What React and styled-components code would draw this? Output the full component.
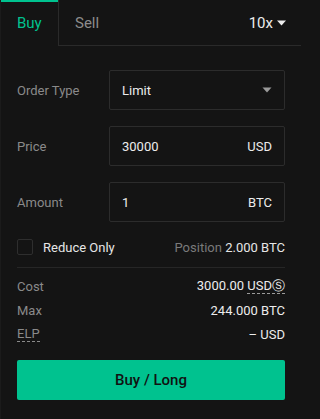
import React from "react";
import styled, { createGlobalStyle } from "styled-components";

const Global = createGlobalStyle`
  html, body { margin: 0; padding: 0; background: #141414; }
  body { font-family: Roboto, "Liberation Sans", Arial, sans-serif; }
  * { box-sizing: border-box; }
`;

const Panel = styled.div`
  width: 301px;
  height: 419px;
  background: #141414;
  border-left: 1px solid #1b1b1b;
  color: #e6e6e6;
  font-size: 13px;
  overflow: hidden;
`;

const Tabs = styled.div`
  display: flex;
  height: 46px;
`;

const ActiveTab = styled.div`
  flex: 0 0 57px;
  border-top: 2px solid #00c28f;
  color: #00c28f;
  font-size: 15px;
  display: flex;
  align-items: center;
  padding-left: 16px;
  padding-bottom: 2px;
`;

const TabRest = styled.div`
  flex: 1 1 0;
  min-width: 0;
  display: flex;
  align-items: center;
  border-left: 1px solid #2a2a2a;
  border-bottom: 1px solid #2a2a2a;
  padding: 0 15px 0 16px;
`;

const Tab = styled.div`
  color: #8c8c8c;
  font-size: 15px;
`;

const Leverage = styled.div`
  margin-left: auto;
  display: flex;
  align-items: center;
  gap: 4px;
  font-size: 15px;
  color: #ececec;
`;

const Caret = ({ color = "#ececec", w = 9, h = 6 }) => (
  <svg width={w} height={h} viewBox="0 0 9 6">
    <path d="M0 0.5 H9 L4.5 5.5 Z" fill={color} />
  </svg>
);

const Form = styled.div`
  padding: 24px 16px 0 16px;
  display: flex;
  flex-direction: column;
`;

const Rows = styled.div`
  display: flex;
  flex-direction: column;
  gap: 16px;
`;

const Row = styled.div`
  display: flex;
  align-items: center;
  height: 40px;
`;

const Label = styled.div`
  width: 92px;
  color: #8a8a8a;
`;

const Field = styled.div`
  flex: 1;
  height: 40px;
  border: 1px solid #2c2c2c;
  border-radius: 2px;
  display: flex;
  align-items: center;
  justify-content: space-between;
  padding: 0 12px;
  color: #ececec;
`;

const CheckRow = styled.div`
  display: flex;
  align-items: center;
  justify-content: space-between;
  margin-top: 17px;
  height: 16px;
`;

const CheckLabel = styled.label`
  display: flex;
  align-items: center;
  gap: 10px;
  color: #e6e6e6;
`;

const Box = styled.span`
  width: 16px;
  height: 16px;
  border: 1px solid #2e2e2e;
  border-radius: 2px;
`;

const Muted = styled.span`
  color: #7a7a7a;
`;

const Divider = styled.div`
  height: 1px;
  background: #262626;
  margin: 12px 0 6px;
`;

const InfoRow = styled.div`
  display: flex;
  justify-content: space-between;
  align-items: center;
  height: 24px;
`;

const InfoLabel = styled.span`
  color: #8a8a8a;
  ${(p) => p.$dashed && `border-bottom: 1px dashed #8a8a8a; line-height: 15px;`}
`;

const Value = styled.span`
  color: #ececec;
`;

const Dashed = styled.span`
  border-bottom: 1px dashed #9a9a9a;
  line-height: 15px;
  display: inline-block;
`;

const Button = styled.button`
  margin-top: 14px;
  height: 40px;
  border: none;
  border-radius: 2px;
  background: #00c28f;
  color: #111;
  font-family: inherit;
  font-size: 15px;
  font-weight: 500;
`;

export default function App() {
  return (
    <>
      <Global />
      <Panel>
        <Tabs>
          <ActiveTab>Buy</ActiveTab>
          <TabRest>
            <Tab>Sell</Tab>
            <Leverage>
              10x <Caret />
            </Leverage>
          </TabRest>
        </Tabs>
        <Form>
          <Rows>
            <Row>
              <Label>Order Type</Label>
              <Field>
                Limit <Caret color="#9a9a9a" w={10} h={6} />
              </Field>
            </Row>
            <Row>
              <Label>Price</Label>
              <Field>
                <span>30000</span>
                <span>USD</span>
              </Field>
            </Row>
            <Row>
              <Label>Amount</Label>
              <Field>
                <span>1</span>
                <span>BTC</span>
              </Field>
            </Row>
          </Rows>
          <CheckRow>
            <CheckLabel>
              <Box />
              Reduce Only
            </CheckLabel>
            <span>
              <Muted>Position</Muted> 2.000 BTC
            </span>
          </CheckRow>
          <Divider />
          <InfoRow>
            <InfoLabel>Cost</InfoLabel>
            <Value>
              3000.00 <Dashed>USDⓈ</Dashed>
            </Value>
          </InfoRow>
          <InfoRow>
            <InfoLabel>Max</InfoLabel>
            <Value>244.000 BTC</Value>
          </InfoRow>
          <InfoRow>
            <InfoLabel $dashed>ELP</InfoLabel>
            <Value>– USD</Value>
          </InfoRow>
          <Button>Buy / Long</Button>
        </Form>
      </Panel>
    </>
  );
}
